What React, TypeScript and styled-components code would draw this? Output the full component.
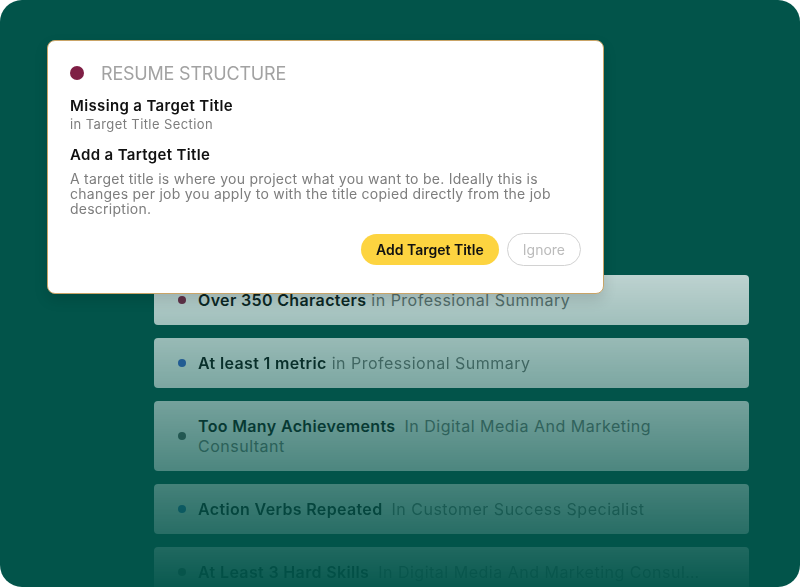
import styled, { createGlobalStyle } from 'styled-components'

const GlobalStyle = createGlobalStyle`
  html, body { margin: 0; padding: 0; background: #ffffff; }
  body { font-family: Inter, "Noto Sans", sans-serif; }
  * { box-sizing: border-box; }
`

interface Issue {
    title: string;
    where: string;
    dot: string;
    wide?: boolean;
    single?: boolean;
}

const issues: Issue[] = [
    { title: 'Over 350 Characters', where: 'in Professional Summary', dot: '#8a2348' },
    { title: 'At least 1 metric', where: 'in Professional Summary', dot: '#3f63d0' },
    { title: 'Too Many Achievements', where: 'In Digital Media And Marketing Consultant', dot: '#5a5f5f', wide: true },
    { title: 'Action Verbs Repeated', where: 'In Customer Success Specialist', dot: '#2f6fb8', wide: true },
    { title: 'At Least 3 Hard Skills', where: 'In Digital Media And Marketing Consul…', dot: '#5a5f5f', wide: true, single: true },
]

function App() {
    return (<>
        <GlobalStyle />
        <Canvas>
            <IssueList>
                {issues.map((it) => (
                    <IssueCard key={it.title}>
                        <Dot $color={it.dot} $size={8} />
                        <IssueText $single={it.single}>
                            <strong>{it.title}</strong>{' '}
                            <Where $wide={it.wide}>{it.where}</Where>
                        </IssueText>
                    </IssueCard>
                ))}
            </IssueList>

            <Popup>
                <Header>
                    <Dot $color="#7f1f45" $size={14} />
                    <Category>RESUME STRUCTURE</Category>
                </Header>
                <Problem>Missing a Target Title</Problem>
                <Section>in Target Title Section</Section>
                <Fix>Add a Tartget Title</Fix>
                <Description>
                    A target title is where you project what you want to be. Ideally this is changes per job you apply to with the title copied directly from the job description.
                </Description>
                <Actions>
                    <PrimaryButton>Add Target Title</PrimaryButton>
                    <GhostButton>Ignore</GhostButton>
                </Actions>
            </Popup>
        </Canvas>
    </>);
}

const Canvas = styled.div`
    position: relative;
    width: 800px;
    height: 587px;
    background: #02544a;
    border-radius: 22px;
    overflow: hidden;
`

const IssueList = styled.div`
    display: flex;
    flex-direction: column;
    gap: 13px;
    width: 595px;
    margin-left: 154px;
    padding-top: 275px;
    -webkit-mask-image: linear-gradient(to bottom, transparent 0, transparent 275px, rgba(0,0,0,0.74) 275px, rgba(0,0,0,0.03) 587px);
    mask-image: linear-gradient(to bottom, transparent 0, transparent 275px, rgba(0,0,0,0.74) 275px, rgba(0,0,0,0.03) 587px);
`

const IssueCard = styled.div`
    display: flex;
    align-items: center;
    gap: 12px;
    padding: 15px 24px;
    background: #ffffff;
    border-radius: 4px;
`

const Dot = styled.span<{ $color: string; $size: number }>`
    flex: none;
    width: ${p => p.$size}px;
    height: ${p => p.$size}px;
    border-radius: 50%;
    background: ${p => p.$color};
`

const IssueText = styled.div<{ $single?: boolean }>`
    flex: 1;
    min-width: 0;
    padding-right: 30px;
    font-size: 16px;
    line-height: 20px;
    letter-spacing: 0.5px;
    color: #777777;
    white-space: ${p => p.$single ? 'nowrap' : 'normal'};
    overflow: hidden;
    strong {
        font-weight: 600;
        color: #111111;
        letter-spacing: 0.35px;
    }
`

const Where = styled.span<{ $wide?: boolean }>`
    margin-left: ${p => p.$wide ? '4px' : '0'};
`

const Popup = styled.div`
    position: absolute;
    left: 47px;
    top: 40px;
    width: 557px;
    height: 254px;
    padding: 20px 22px 0 22px;
    background: #ffffff;
    border: 1px solid #c9a467;
    border-radius: 8px;
    box-shadow: 0 6px 14px rgba(0, 0, 0, 0.12);
    display: flex;
    flex-direction: column;
`

const Header = styled.div`
    display: flex;
    align-items: center;
    gap: 17px;
    height: 24px;
`

const Category = styled.span`
    font-size: 18px;
    color: #a2a2a2;
    letter-spacing: -0.2px;
`

const Problem = styled.div`
    margin-top: 11px;
    font-size: 15px;
    line-height: 20px;
    font-weight: 600;
    letter-spacing: 0.35px;
    color: #111111;
`

const Section = styled.div`
    font-size: 13px;
    line-height: 17px;
    letter-spacing: 0.4px;
    color: #7d7d7d;
`

const Fix = styled(Problem)`
    margin-top: 12px;
`

const Description = styled.p`
    margin: 6px 0 0 0;
    font-size: 14px;
    line-height: 15px;
    letter-spacing: 0.25px;
    color: #7d7d7d;
`

const Actions = styled.div`
    display: flex;
    justify-content: flex-end;
    align-items: center;
    gap: 8px;
    margin-top: 17px;
`

const PrimaryButton = styled.button`
    height: 31px;
    padding: 0 15px;
    border: none;
    border-radius: 16px;
    background: #fdd440;
    font-family: inherit;
    font-size: 14px;
    font-weight: 600;
    color: #111111;
`

const GhostButton = styled.button`
    height: 33px;
    padding: 0 15px;
    border: 1px solid #d2d2d2;
    border-radius: 17px;
    background: #ffffff;
    font-family: inherit;
    font-size: 14px;
    color: #bbbbbb;
`

export default App;
